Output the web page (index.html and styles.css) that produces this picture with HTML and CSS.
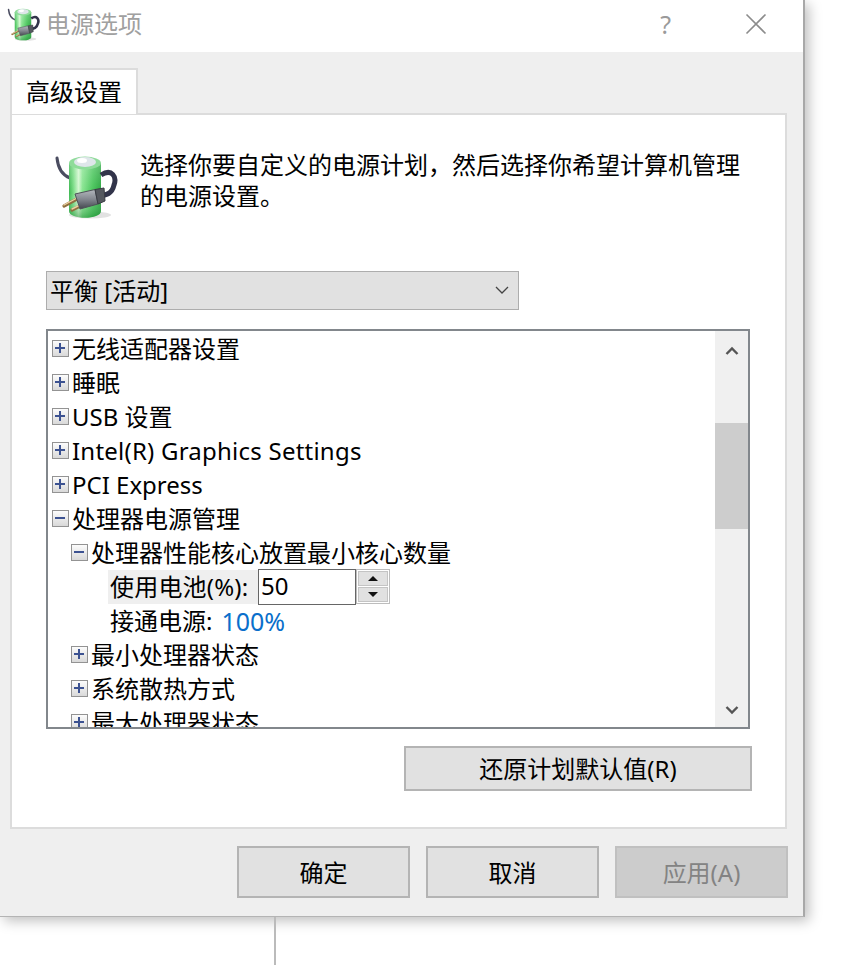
FILE: index.html
```html
<!DOCTYPE html>
<html lang="zh-CN">
<head>
  <meta charset="UTF-8" />
  <title>电源选项</title>
  <link rel="stylesheet" href="styles.css">
</head>
<body>

  <!-- shared battery icon -->
  <svg class="defs" width="0" height="0">
    <defs>
      <linearGradient id="cell" x1="0" x2="1" y1="0" y2="0">
        <stop offset="0" stop-color="#3cb850"/>
        <stop offset="0.14" stop-color="#78dc84"/>
        <stop offset="0.3" stop-color="#d2f7cf"/>
        <stop offset="0.42" stop-color="#86e48f"/>
        <stop offset="0.75" stop-color="#45c458"/>
        <stop offset="1" stop-color="#2aa63f"/>
      </linearGradient>
      <linearGradient id="cell-shade" x1="0" x2="0" y1="0" y2="1">
        <stop offset="0" stop-color="#fff" stop-opacity="0.25"/>
        <stop offset="0.55" stop-color="#fff" stop-opacity="0"/>
        <stop offset="1" stop-color="#0b7a24" stop-opacity="0.45"/>
      </linearGradient>
      <linearGradient id="plug" x1="0" x2="0" y1="0" y2="1">
        <stop offset="0" stop-color="#b4b8be"/>
        <stop offset="0.5" stop-color="#83878f"/>
        <stop offset="1" stop-color="#43464e"/>
      </linearGradient>
      <symbol id="battery" viewBox="0 0 64 66">
        <ellipse cx="36" cy="62" rx="21" ry="3.5" fill="#e2e2e2"/>
        <path d="M3 5C4 15 8 22 16 25" fill="none" stroke="#4a4c60" stroke-width="3" stroke-linecap="round"/>
        <path d="M15 10V58C15 67 47 67 47 58V10Z" fill="url(#cell)"/>
        <path d="M15 10V58C15 67 47 67 47 58V10Z" fill="url(#cell-shade)"/>
        <ellipse cx="31" cy="10" rx="16" ry="6.5" fill="#8fdc9a"/>
        <ellipse cx="31" cy="9" rx="11" ry="5" fill="#dfe6ea"/>
        <ellipse cx="28" cy="7.5" rx="5" ry="2.5" fill="#fff"/>
        <path d="M47 22C58 15 63 24 60 32C58 41 52 42 46 43" fill="none" stroke="#32344a" stroke-width="5"/>
        <path d="M10 53L23 46" stroke="#8f6f3f" stroke-width="3.2" stroke-linecap="round"/>
        <path d="M18 57L32 50" stroke="#8f6f3f" stroke-width="3.2" stroke-linecap="round"/>
        <path d="M10 52L23 45" stroke="#ecd0a0" stroke-width="1.4" stroke-linecap="round"/>
        <path d="M18 56L32 49" stroke="#ecd0a0" stroke-width="1.4" stroke-linecap="round"/>
        <path d="M21 41L41 36.500L44 51L26 56Z" fill="url(#plug)" stroke="#50535a" stroke-width="1" stroke-linejoin="round"/>
        <path d="M41 36.500L50 35L51 48L44 51Z" fill="#55585f" stroke="#3a3c44" stroke-width="1" stroke-linejoin="round"/>
      </symbol>
    </defs>
  </svg>

  <div class="window">
    <div class="titlebar">
      <svg class="title-icon"><use href="#battery"/></svg>
      <span class="title-text">电源选项</span>
      <span class="help">?</span>
      <svg class="close" width="22" height="22" viewBox="0 0 22 22">
        <path d="M1.500 1.500L20.500 20.500M20.500 1.500L1.500 20.500" stroke="#8c8c8c" stroke-width="1.6" fill="none"/>
      </svg>
    </div>

    <div class="content">
      <div class="tab">高级设置</div>

      <div class="panel">
        <div class="intro">
          <svg class="intro-icon"><use href="#battery"/></svg>
          <p>选择你要自定义的电源计划，然后选择你希望计算机管理的电源设置。</p>
        </div>

        <div class="combo">
          <span>平衡 [活动]</span>
          <svg width="14" height="8" viewBox="0 0 14 8"><path d="M1 1L7 7L13 1" fill="none" stroke="#444" stroke-width="1.3"/></svg>
        </div>

        <div class="tree">
          <div class="tree-list">
            <div class="row"><i class="box plus"></i>无线适配器设置</div>
            <div class="row"><i class="box plus"></i>睡眠</div>
            <div class="row"><i class="box plus"></i>USB 设置</div>
            <div class="row wide"><i class="box plus"></i>Intel(R) Graphics Settings</div>
            <div class="row"><i class="box plus"></i>PCI Express</div>
            <div class="row"><i class="box minus"></i>处理器电源管理</div>
            <div class="row sub"><i class="box minus"></i>处理器性能核心放置最小核心数量</div>
            <div class="row leaf">
              <span class="leaf-label">使用电池(%):</span>
              <span class="spin-input">50</span>
              <span class="spin">
                <span class="spin-btn"><b class="tri-up"></b></span>
                <span class="spin-btn"><b class="tri-down"></b></span>
              </span>
            </div>
            <div class="row leaf"><span class="leaf-label plain">接通电源:</span><a class="value">100%</a></div>
            <div class="row sub"><i class="box plus"></i>最小处理器状态</div>
            <div class="row sub"><i class="box plus"></i>系统散热方式</div>
            <div class="row sub"><i class="box plus"></i>最大处理器状态</div>
          </div>
          <div class="scrollbar">
            <div class="arrow up">
              <svg width="14" height="10" viewBox="0 0 14 10"><path d="M1.500 8L7 2.500L12.500 8" fill="none" stroke="#555" stroke-width="2.4"/></svg>
            </div>
            <div class="track"><div class="thumb"></div></div>
            <div class="arrow down">
              <svg width="14" height="10" viewBox="0 0 14 10"><path d="M1.500 2L7 7.500L12.500 2" fill="none" stroke="#555" stroke-width="2.4"/></svg>
            </div>
          </div>
        </div>

        <div class="restore-row">
          <button class="btn restore">还原计划默认值(R)</button>
        </div>
      </div>

      <div class="actions">
        <button class="btn action">确定</button>
        <button class="btn action">取消</button>
        <button class="btn action disabled">应用(A)</button>
      </div>
    </div>
  </div>

  <div class="behind-line"></div>

</body>
</html>
```

FILE: styles.css
```css
html, body {
  margin: 0;
  height: 965px;
  overflow: hidden;
  background: #fff;
}

body {
  font-family: 'Noto Sans', 'Noto Sans CJK SC', sans-serif;
  font-size: 24px;
  color: #000;
}

.defs {
  position: absolute;
}

.window {
  width: 805px;
  height: 917px;
  box-sizing: border-box;
  border-right: 2px solid #a8a8a8;
  border-bottom: 1px solid #b4b4b4;
  box-shadow: 4px 4px 12px rgba(0, 0, 0, 0.25);
  background: #efefef;
}

.titlebar {
  height: 52px;
  box-sizing: border-box;
  background: #fff;
  display: flex;
  align-items: center;
  padding: 0 0 5px 7px;
}

.title-icon {
  width: 33px;
  height: 34px;
  margin-right: 6px;
}

.title-text {
  color: #a0a0a0;
  line-height: 48px;
}

.help {
  margin-left: auto;
  color: #9a9a9a;
  font-size: 25px;
  margin-right: 74px;
}

.close {
  margin-right: 36px;
}

.content {
  padding: 16px 16px 0 10px;
}

.tab {
  width: 128px;
  height: 46px;
  box-sizing: border-box;
  background: #fff;
  border: 2px solid #dcdcdc;
  border-bottom: none;
  margin-bottom: -1px;
  position: relative;
  line-height: 44px;
  text-align: center;
}

.panel {
  height: 716px;
  box-sizing: border-box;
  background: #fff;
  border: 2px solid #dcdcdc;
  padding: 0 34px;
}

.intro {
  display: flex;
  height: 156px;
  padding-top: 38px;
  box-sizing: border-box;
}

.intro-icon {
  width: 64px;
  height: 66px;
  margin-left: 8px;
  flex: none;
}

.intro p {
  margin: 0 0 0 22px;
  width: 604px;
  line-height: 31px;
  position: relative;
  top: -4px;
}

.combo {
  width: 473px;
  height: 39px;
  box-sizing: border-box;
  background: #e1e1e1;
  border: 1px solid #adadad;
  display: flex;
  align-items: center;
  justify-content: space-between;
  padding: 0 9px 2px 3px;
  margin-bottom: 19px;
}

.tree {
  width: 704px;
  height: 400px;
  box-sizing: border-box;
  border: 2px solid #82878c;
  display: flex;
}

.tree-list {
  flex: 1;
  overflow: hidden;
  padding-top: 1px;
}

.row {
  height: 34px;
  box-sizing: border-box;
  line-height: 34px;
  display: flex;
  align-items: center;
  padding: 0 0 1px 4px;
  white-space: nowrap;
}

.row.wide {
  letter-spacing: 0.23px;
}

.row.sub {
  padding-left: 23px;
}

.row.leaf {
  padding-left: 60px;
}

.box {
  width: 17px;
  height: 17px;
  box-sizing: border-box;
  flex: none;
  margin-right: 3px;
  border: 1px solid #939393;
  background: linear-gradient(#fcfcfc, #d9d9d9);
  position: relative;
}

.box::before,
.box.plus::after {
  content: "";
  position: absolute;
  background: #3c5291;
}

.box::before {
  left: 2px;
  right: 3px;
  top: 6px;
  height: 2px;
}

.box.plus::after {
  top: 2px;
  bottom: 3px;
  left: 6px;
  width: 2px;
}

.leaf-label {
  background: #efefef;
  width: 150px;
  height: 34px;
  padding-left: 2px;
  box-sizing: border-box;
  letter-spacing: 0.2px;
  line-height: 34px;
}

.leaf-label.plain {
  background: none;
  width: auto;
  margin-right: 10px;
  letter-spacing: 0;
  height: auto;
}

.spin-input {
  width: 98px;
  height: 36px;
  box-sizing: border-box;
  border: 1px solid #666;
  line-height: 32px;
  padding-left: 2px;
  background: #fff;
}

.spin {
  width: 34px;
  height: 35px;
  box-sizing: border-box;
  border: 1px solid #bdbdbd;
  padding: 1px;
  display: flex;
  flex-direction: column;
  gap: 1px;
}

.spin-btn {
  flex: 1;
  background: #e1e1e1;
  border: 1px solid #c4c4c4;
  display: flex;
  align-items: center;
  justify-content: center;
}

.tri-up,
.tri-down {
  width: 0;
  height: 0;
  border-left: 5px solid transparent;
  border-right: 5px solid transparent;
}

.tri-up {
  border-bottom: 5px solid #111;
}

.tri-down {
  border-top: 5px solid #111;
}

.value {
  color: #0a6fcb;
  font-size: 25px;
  margin-left: -1px;
}

.scrollbar {
  width: 33px;
  background: #f0f0f0;
  display: flex;
  flex-direction: column;
}

.arrow {
  flex: none;
  display: flex;
  align-items: center;
  justify-content: center;
}

.arrow.up {
  height: 40px;
}

.arrow.down {
  height: 34px;
}

.track {
  flex: 1;
  padding-top: 52px;
}

.thumb {
  height: 106px;
  background: #cdcdcd;
}

.restore-row {
  display: flex;
  justify-content: flex-end;
  width: 706px;
  margin-top: 17px;
}

.btn {
  font: inherit;
  color: #000;
  background: #e1e1e1;
  border: 2px solid #b4b4b4;
  padding: 0 0 2px;
}

.restore {
  width: 348px;
  height: 45px;
}

.actions {
  display: flex;
  justify-content: flex-end;
  gap: 16px;
  margin-top: 17px;
  margin-right: -1px;
}

.action {
  width: 173px;
  height: 52px;
}

.action.disabled {
  background: #cccccc;
  border-color: #c0c0c0;
  color: #838383;
}

.behind-line {
  width: 2px;
  height: 48px;
  margin-left: 274px;
  background: #bbbbbb;
}
```
